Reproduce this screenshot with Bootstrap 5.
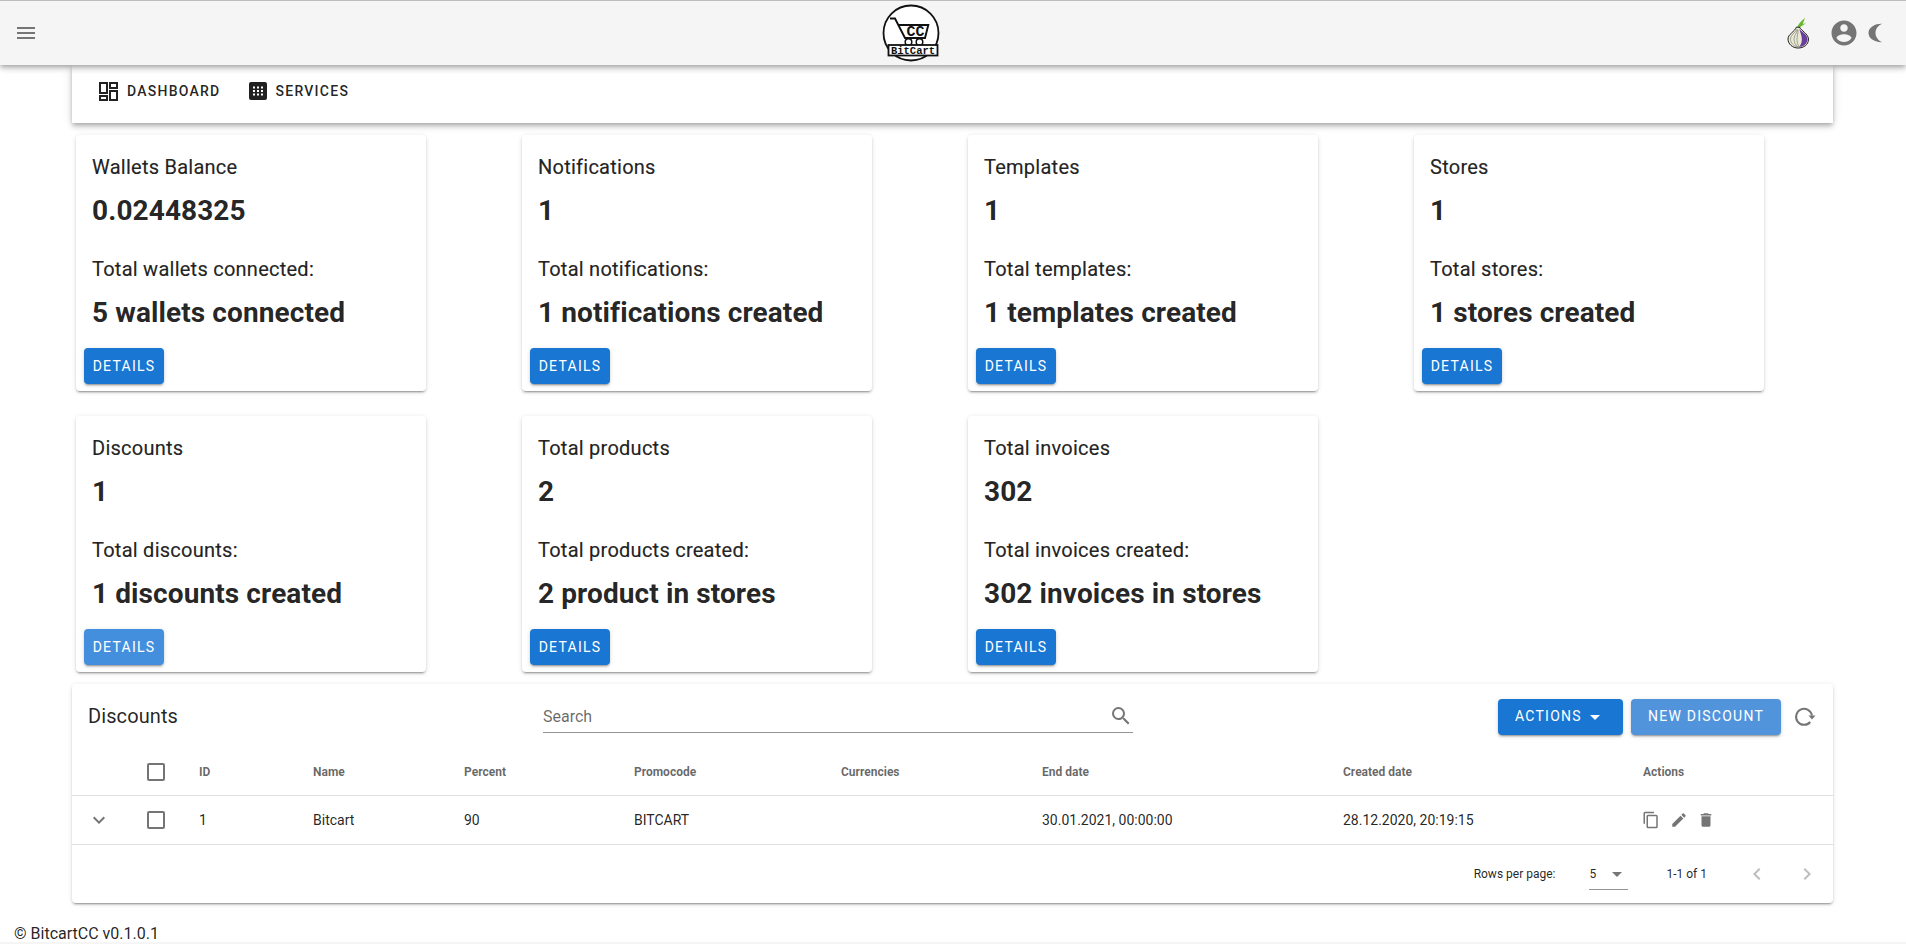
<!DOCTYPE html>
<html lang="en">

<head>
  <meta charset="UTF-8">
  <title>BitcartCC Admin</title>
  <link href="https://cdn.jsdelivr.net/npm/bootstrap@5.3.2/dist/css/bootstrap.min.css" rel="stylesheet">
  <style>
    html, body { height: 944px; overflow: hidden; }
    body { font-family: Roboto, "Liberation Sans", sans-serif; color: rgba(0,0,0,.87); background: #fff; font-size: 16px; }

    .top-bar { height: 65px; background: #f5f5f5; border-top: 1px solid #bdbdbd; padding: 0 23px 0 14px; box-shadow: 0 2px 4px -1px rgba(0,0,0,.2), 0 4px 5px 0 rgba(0,0,0,.14), 0 1px 10px 0 rgba(0,0,0,.12); position: relative; z-index: 3; }
    .top-logo { margin-left: 842px; }
    .bar-right { margin-left: auto; }

    .page-wrap { padding: 0 73px 0 72px; }
    .sub-bar { height: 58px; background: #fff; padding: 0 16px; box-shadow: 0 2px 4px -1px rgba(0,0,0,.2), 0 4px 5px 0 rgba(0,0,0,.14), 0 1px 10px 0 rgba(0,0,0,.12); position: relative; z-index: 2; }
    .sub-link { font-size: 14px; font-weight: 500; letter-spacing: .0892857em; color: rgba(0,0,0,.87); gap: 9px; height: 36px; margin-top: -6px; }
    .sub-link.first-link { margin-left: 11px; margin-right: 28px; }

    .stat-row { margin: -13px -15px 0 -8px; --bs-gutter-x: 24px; --bs-gutter-y: 25px; }
    .stat-box { width: 350px; height: 256px; padding: 16px 8px 8px; border: 0; border-radius: 4px; box-shadow: 0 3px 1px -2px rgba(0,0,0,.2), 0 2px 2px 0 rgba(0,0,0,.14), 0 1px 5px 0 rgba(0,0,0,.12); }
    .stat-box .t1, .stat-box .t2 { font-size: 20px; font-weight: 400; letter-spacing: .0125em; line-height: 32px; padding: 0 8px; -webkit-text-stroke: .2px currentColor; }
    .stat-box .t1 { margin: 0; }
    .stat-box .t2 { margin: 24px 0 0; }
    .stat-box .n1, .stat-box .n2 { font-size: 28px; font-weight: 700; letter-spacing: .1px; line-height: 36px; padding: 0 8px; margin: 10px 0 0; }
    .blue-btn { background: #1976d2; color: #fff; border: 0; border-radius: 4px; font-size: 14px; font-weight: 400; letter-spacing: .0892857em; text-transform: uppercase; box-shadow: 0 3px 1px -2px rgba(0,0,0,.2), 0 2px 2px 0 rgba(0,0,0,.14), 0 1px 5px 0 rgba(0,0,0,.12); }
    .stat-box .blue-btn { width: 80px; height: 36px; padding: 0; margin-top: 17px; }
    .stat-box .btn-hover { background: #448fdd; }
    .btn-light-blue { background: #5294dc; }

    .table-box { margin-top: 12px; height: 219px; background: #fff; border-radius: 4px; box-shadow: 0 3px 1px -2px rgba(0,0,0,.2), 0 2px 2px 0 rgba(0,0,0,.14), 0 1px 5px 0 rgba(0,0,0,.12); }
    .tool-row { height: 64px; padding: 0 16px; }
    .tool-title { font-size: 20px; font-weight: 400; letter-spacing: .1px; width: 455px; }
    .search-field { width: 590px; height: 41px; margin-top: -8px; border-bottom: 1px solid rgba(0,0,0,.42); color: rgba(0,0,0,.6); padding-top: 13px; }
    .search-field svg { margin-top: -1px; }
    .tool-btns { margin-left: auto; gap: 8px; margin-top: 1px; }
    .tool-btns .blue-btn { height: 36px; padding: 0; }
    .tool-btns .btn-actions { width: 125px; padding-left: 17px; text-align: left; }
    .caret-down { display: inline-block; margin-left: 3px; border: 5px solid transparent; border-top-color: #fff; border-bottom: 0; vertical-align: middle; }
    .refresh-icon { margin-left: 3px; margin-right: 1px; }
    .grid-head, .grid-line { display: grid; grid-template-columns: 75px 52px 114px 151px 170px 207px 201px 301px 300px 1fr; align-items: center; }
    .grid-head { height: 48px; border-bottom: 1px solid #e0e0e0; font-size: 12px; font-weight: 700; color: rgba(0,0,0,.6); }
    .grid-line { height: 49px; border-bottom: 1px solid #e0e0e0; font-size: 14px; }
    .box-check { display: block; width: 18px; height: 18px; border: 2px solid #757575; border-radius: 2px; }
    .cell-first { padding-left: 15px; }
    .row-icons { gap: 9.5px; margin-left: -1px; }
    .pager-row { height: 58px; font-size: 12px; padding-right: 14px; }
    .rows-pick { width: 39px; height: 30px; margin-left: 34px; margin-top: 1px; border-bottom: 1px solid rgba(0,0,0,.42); }
    .pager-count { margin-left: 38px; }
    .pager-prev { margin-left: 38px; }
    .pager-next { margin-left: 26px; }

    .page-foot { height: 20px; margin-top: 19px; padding-left: 14px; font-size: 16px; line-height: 24px; }
    .foot-strip { height: 3px; background: #f5f5f5; }
  </style>
</head>

<body>

  <header class="top-bar d-flex align-items-center">
    <svg width="24" height="24" viewBox="0 0 24 24" fill="#757575"><path d="M3 6h18v2H3zm0 5h18v2H3zm0 5h18v2H3z"/></svg>
    <svg class="top-logo" width="62" height="60" viewBox="0 0 62 60" aria-label="BitCart logo">
      <circle cx="31" cy="30" r="27.500" fill="#fff" stroke="#111" stroke-width="1.800"/>
      <path d="M10 15.500h5L25 35h20l3.300-13H18" fill="none" stroke="#111" stroke-width="1.900"/>
      <circle cx="28.500" cy="39" r="3.300" fill="none" stroke="#111" stroke-width="1.500"/>
      <circle cx="39.500" cy="39" r="3.300" fill="none" stroke="#111" stroke-width="1.500"/>
      <text x="35.500" y="33" text-anchor="middle" font-family="'Liberation Mono',monospace" font-weight="700" font-size="15" fill="#111">CC</text>
      <rect x="8.500" y="42" width="49" height="10.500" fill="#fff" stroke="#111" stroke-width="1.800"/>
      <text x="33" y="50.800" text-anchor="middle" font-family="'Liberation Mono',monospace" font-weight="700" font-size="10.500" fill="#111">BitCart</text>
    </svg>
    <div class="bar-right d-flex align-items-center">
      <svg width="26" height="32" viewBox="0 0 26 32" style="margin-right:18px">
        <path d="M12 11c1-4 4-7 8-10-1 3-2 4-2 6 1 0 2-1 3-1-2 2-5 3-7 5z" fill="#6ab82e"/>
        <path d="M11.500 10l3.500.5c1 3 8 6 8.500 11.500 0 6-5 9-10.500 9S3 27 3 22c0-5 6.500-7 8.500-12z" fill="#e9e9d6" stroke="#222" stroke-width="1"/>
        <path d="M14.500 11.500c1 3 7.500 5 8 10.500 0 5-4.500 8-8.500 8 2.500-3 3.500-6 2.500-10.500-.5-3-2-5.500-2-8z" fill="#6b3d9a"/>
        <path d="M12 12c-2 4-6.500 6-6.500 10.500 0 3 3 6.500 7 7.500M12.500 12.500c-1 4-3.500 6-3.500 10 0 3 2 6 4 7.500M13 13c0 4-1 6-1 9.500 0 3 1 5.500 2 7.500" fill="none" stroke="#8b8b7c" stroke-width=".8"/>
      </svg>
      <svg width="30" height="30" viewBox="0 0 24 24" fill="#757575" style="margin-right:8px"><path d="M12 2C6.480 2 2 6.480 2 12s4.480 10 10 10 10-4.480 10-10S17.520 2 12 2zm0 3c1.660 0 3 1.340 3 3s-1.340 3-3 3-3-1.340-3-3 1.340-3 3-3zm0 14.200c-2.500 0-4.710-1.280-6-3.220.030-1.990 4-3.080 6-3.080 1.990 0 5.970 1.090 6 3.080-1.290 1.940-3.500 3.220-6 3.220z"/></svg>
      <svg width="16" height="24" viewBox="0 0 16 24" fill="#757575"><path d="M15 2.800C9 2.500 1.500 5.800 1.500 12S9 21.500 15 21.200c-3.500-1.500-6.500-5-6.500-9.200S11.500 4.300 15 2.800z"/></svg>
    </div>
  </header>

  <div class="page-wrap">
    <nav class="sub-bar d-flex align-items-center">
      <a class="sub-link first-link d-flex align-items-center text-decoration-none" href="#">
        <svg width="19" height="19" viewBox="0 0 19 19" fill="none" stroke="#212121" stroke-width="2"><rect x="1" y="1" width="7" height="10"/><rect x="11" y="1" width="7" height="5"/><rect x="1" y="14" width="7" height="4"/><rect x="11" y="9" width="7" height="9"/></svg>
        DASHBOARD
      </a>
      <a class="sub-link d-flex align-items-center text-decoration-none" href="#">
        <svg width="18" height="18" viewBox="0 0 18 18"><rect width="18" height="18" rx="2" fill="#212121"/><path d="M4 4.500h2v2H4zm4 0h2v2H8zm4 0h2v2h-2zM4 8h2v2H4zm4 0h2v2H8zm4 0h2v2h-2zM4 11.500h2v2H4zm4 0h2v2H8zm4 0h2v2h-2z" fill="#fff"/></svg>
        SERVICES
      </a>
    </nav>

    <div class="row stat-row" id="statRow"></div>

    <section class="table-box">
      <div class="tool-row d-flex align-items-center">
        <div class="tool-title">Discounts</div>
        <div class="search-field d-flex justify-content-between align-items-start">
          <span>Search</span>
          <svg width="24" height="24" viewBox="0 0 24 24" fill="#757575"><path d="M15.500 14h-.790l-.280-.270A6.470 6.470 0 0 0 16 9.500 6.500 6.500 0 1 0 9.500 16c1.610 0 3.090-.590 4.230-1.570l.270.280v.790l5 4.990L20.490 19l-4.990-5zm-6 0C7.010 14 5 11.990 5 9.500S7.010 5 9.500 5 14 7.010 14 9.500 11.990 14 9.500 14z"/></svg>
        </div>
        <div class="tool-btns d-flex align-items-center">
          <button class="blue-btn btn-actions">Actions <span class="caret-down"></span></button>
          <button class="blue-btn btn-light-blue" style="width:150px">New discount</button>
          <svg class="refresh-icon" width="24" height="24" viewBox="0 0 24 24"><path d="M20 10.500A8 8 0 1 0 18.200 17" fill="none" stroke="#757575" stroke-width="2"/><path d="M16.500 10.500h7L20 14.500z" fill="#757575"/></svg>
        </div>
      </div>
      <div class="grid-head">
        <div></div><div><span class="box-check"></span></div><div>ID</div><div>Name</div><div>Percent</div><div>Promocode</div><div>Currencies</div><div>End date</div><div>Created date</div><div>Actions</div>
      </div>
      <div class="grid-line">
        <div class="cell-first d-flex"><svg width="24" height="24" viewBox="0 0 24 24" fill="#757575"><path d="M7.410 8.580L12 13.170l4.590-4.590L18 10l-6 6-6-6 1.410-1.420z"/></svg></div>
        <div><span class="box-check"></span></div>
        <div>1</div>
        <div>Bitcart</div>
        <div>90</div>
        <div>BITCART</div>
        <div></div>
        <div>30.01.2021, 00:00:00</div>
        <div>28.12.2020, 20:19:15</div>
        <div class="row-icons d-flex">
          <svg width="18" height="18" viewBox="0 0 24 24" fill="#757575"><path d="M19 21H8V7h11m0-2H8a2 2 0 0 0-2 2v14a2 2 0 0 0 2 2h11a2 2 0 0 0 2-2V7a2 2 0 0 0-2-2m-3-4H4a2 2 0 0 0-2 2v14h2V3h12V1z"/></svg>
          <svg width="18" height="18" viewBox="0 0 24 24" fill="#757575"><path d="M20.710 7.040c.390-.390.390-1.040 0-1.410l-2.340-2.340c-.370-.390-1.020-.390-1.410 0l-1.840 1.830 3.750 3.750M3 17.250V21h3.750L17.810 9.930l-3.750-3.750L3 17.250z"/></svg>
          <svg width="18" height="18" viewBox="0 0 24 24" fill="#757575"><path d="M19 4h-3.500l-1-1h-5l-1 1H5v2h14M6 19a2 2 0 0 0 2 2h8a2 2 0 0 0 2-2V7H6v12z"/></svg>
        </div>
      </div>
      <div class="pager-row d-flex align-items-center justify-content-end">
        <span>Rows per page:</span>
        <div class="rows-pick d-flex align-items-center justify-content-between">
          <span>5</span>
          <svg width="24" height="24" viewBox="0 0 24 24" fill="#757575" style="margin-right:-1px"><path d="M7 10l5 5 5-5z"/></svg>
        </div>
        <span class="pager-count">1-1 of 1</span>
        <svg class="pager-prev" width="24" height="24" viewBox="0 0 24 24" fill="rgba(0,0,0,.26)"><path d="M15.410 16.580L10.830 12l4.580-4.590L14 6l-6 6 6 6 1.410-1.420z"/></svg>
        <svg class="pager-next" width="24" height="24" viewBox="0 0 24 24" fill="rgba(0,0,0,.26)"><path d="M8.590 16.580L13.170 12 8.590 7.410 10 6l6 6-6 6-1.410-1.420z"/></svg>
      </div>
    </section>
  </div>

  <footer class="page-foot">© BitcartCC v0.1.0.1</footer>
  <div class="foot-strip"></div>

  <script>
    // stat cards are all the same shape
    const stats = [
      ["Wallets Balance", "0.02448325", "Total wallets connected:", "5 wallets connected"],
      ["Notifications", "1", "Total notifications:", "1 notifications created"],
      ["Templates", "1", "Total templates:", "1 templates created"],
      ["Stores", "1", "Total stores:", "1 stores created"],
      ["Discounts", "1", "Total discounts:", "1 discounts created"],
      ["Total products", "2", "Total products created:", "2 product in stores"],
      ["Total invoices", "302", "Total invoices created:", "302 invoices in stores"]
    ];
    document.getElementById("statRow").innerHTML = stats.map((s, i) => `
      <div class="col-3">
        <div class="card stat-box">
          <p class="t1">${s[0]}</p>
          <p class="n1">${s[1]}</p>
          <p class="t2">${s[2]}</p>
          <p class="n2">${s[3]}</p>
          <div><button class="blue-btn ${i == 4 ? "btn-hover" : ""}">Details</button></div>
        </div>
      </div>`).join("");
  </script>

</body>

</html>
